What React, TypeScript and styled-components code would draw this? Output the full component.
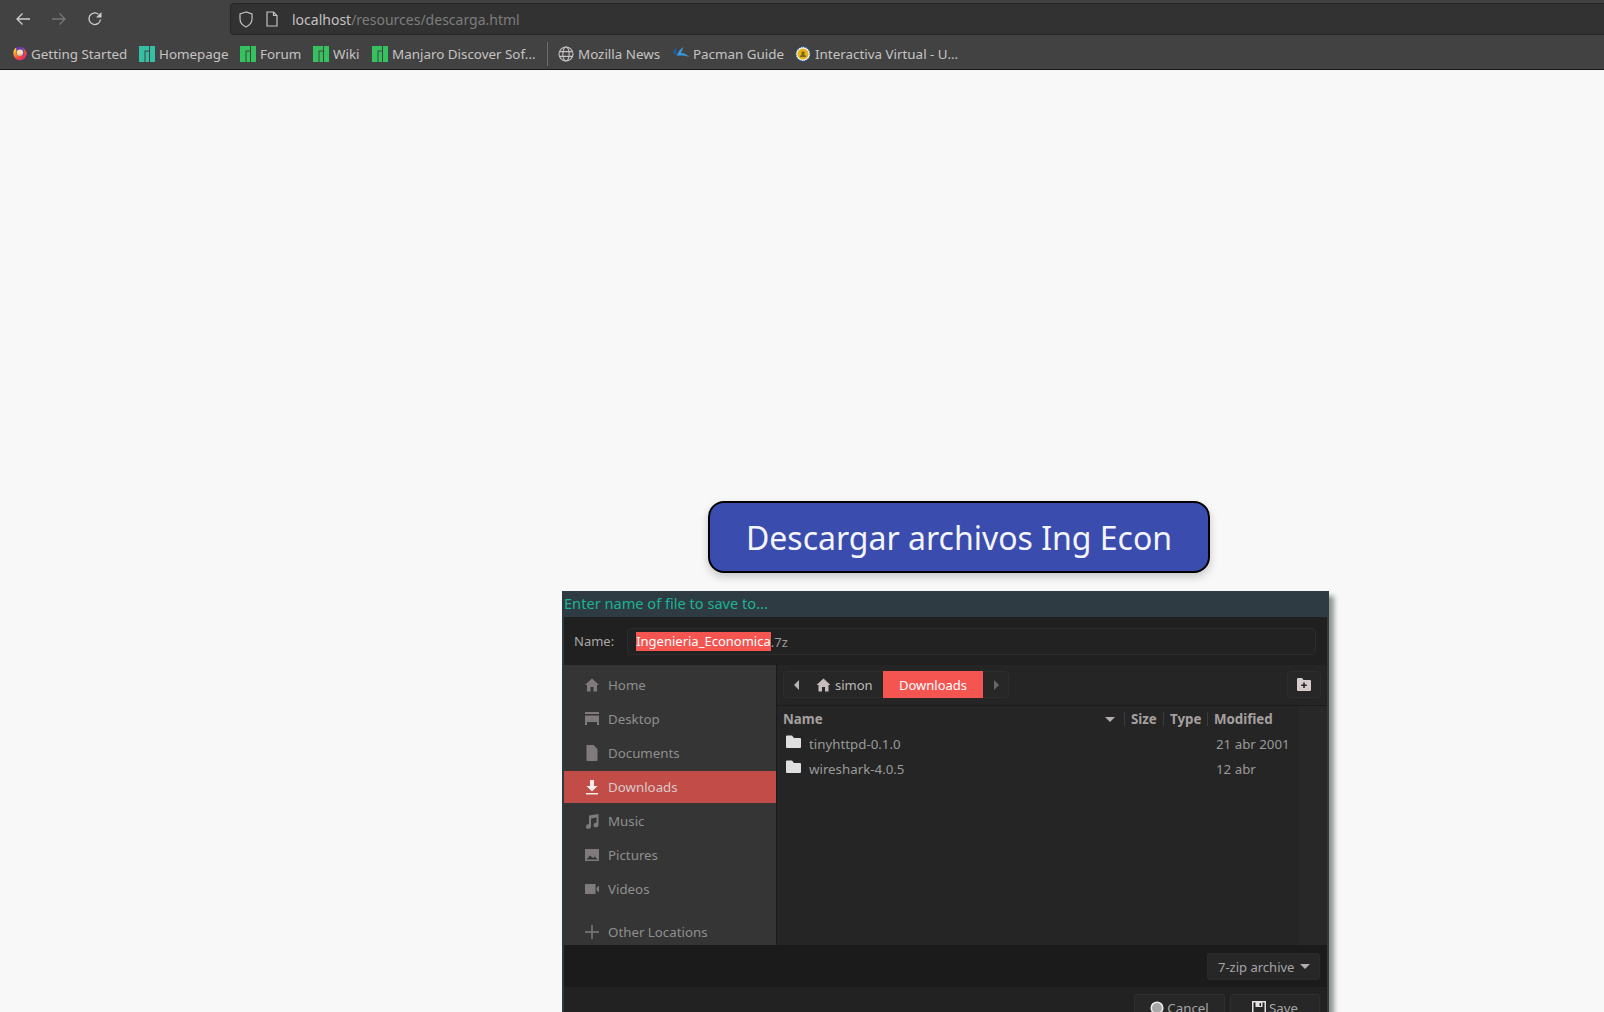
import React from "react";
import styled, { createGlobalStyle } from "styled-components";

const Global = createGlobalStyle`
  html, body { margin: 0; padding: 0; height: 1012px; overflow: hidden; background: #f8f8f8; }
  body { font-family: "Noto Sans", "Open Sans", sans-serif; }
`;

const Page = styled.div`
  width: 1604px;
  height: 1012px;
  overflow: hidden;
  display: flex;
  flex-direction: column;
  background: #f8f8f8;
`;

const Browser = styled.header`
  height: 70px;
  box-sizing: border-box;
  flex: none;
  background: #424242;
  border-bottom: 1px solid #161616;
  display: flex;
  flex-direction: column;
`;

const NavRow = styled.div`
  height: 37px;
  box-sizing: border-box;
  padding-top: 1px;
  display: flex;
  align-items: center;
  padding-left: 12px;
`;

const NavButton = styled.span<{ $dim?: boolean }>`
  width: 22px;
  height: 22px;
  margin-right: 14px;
  display: flex;
  align-items: center;
  justify-content: center;
  color: ${(p) => (p.$dim ? "#777" : "#d0cccc")};
`;

const UrlBar = styled.div`
  margin-left: 110px;
  height: 32px;
  flex: 1;
  box-sizing: border-box;
  background: #323232;
  border: 1px solid #262626;
  border-right: none;
  border-radius: 4px 0 0 4px;
  display: flex;
  align-items: center;
  padding-left: 6px;
  gap: 8px;
  color: #c4c0c0;
  font-size: 14px;
`;

const UrlIcon = styled.span`
  display: flex;
  width: 18px;
  justify-content: center;
  color: #c4c0c0;
`;

const UrlText = styled.span`
  margin-left: 3px;
  color: #c4c0c0;
`;

const UrlPath = styled.span`
  color: #7d7d7d;
`;

const BookmarkRow = styled.div`
  height: 32px;
  box-sizing: border-box;
  padding: 1px 0 0 11px;
  display: flex;
  align-items: center;
  font-size: 13.4px;
  color: #c6c2c2;
`;

const Bookmark = styled.span<{ $w: number }>`
  display: flex;
  align-items: center;
  gap: 4px;
  width: ${(p) => p.$w}px;
  white-space: nowrap;
`;

const BookmarkSep = styled.span`
  width: 1px;
  height: 24px;
  background: #6d6d6d;
  margin: 0 10px 0 0;
`;

const Content = styled.main`
  flex: 1;
  display: flex;
  flex-direction: column;
  align-items: flex-start;
  padding-top: 431px;
`;

const DownloadButton = styled.button`
  margin-left: 708px;
  width: 502px;
  height: 72px;
  box-sizing: border-box;
  background: #3a4cad;
  border: 2px solid #000;
  border-radius: 16px;
  color: #f4f4fb;
  font-family: "Noto Sans", sans-serif;
  font-size: 32px;
  padding: 0;
  box-shadow: 0 4px 8px rgba(0, 0, 0, 0.2);
`;

const Dialog = styled.section`
  margin: 18px 0 0 562px;
  width: 767px;
  height: 430px;
  flex: none;
  background: #2e3b43;
  box-shadow: 5px 5px 5px rgba(0, 0, 0, 0.42);
  display: flex;
  flex-direction: column;
`;

const TitleBar = styled.div`
  height: 26px;
  flex: none;
  color: #1ab394;
  font-size: 14.6px;
  line-height: 25px;
  padding-left: 2px;
`;

const DialogBody = styled.div`
  flex: 1;
  margin: 0 2px;
  display: flex;
  flex-direction: column;
  color: #9c9c9c;
  font-size: 13.3px;
`;

const NameRow = styled.div`
  height: 48px;
  flex: none;
  background: #202020;
  display: flex;
  align-items: center;
  padding: 0 11px 0 10px;
  gap: 13px;
  font-size: 13px;
`;

const NameLabel = styled.label`
  color: #a8a8a8;
`;

const NameEntry = styled.div`
  flex: 1;
  height: 27px;
  margin-top: 1px;
  box-sizing: border-box;
  border: 1px solid #2c2c2c;
  border-radius: 4px;
  background: #222;
  display: flex;
  align-items: center;
  padding-left: 8px;
  color: #9c9c9c;
`;

const Selection = styled.span`
  background: #f45551;
  color: #fff;
  line-height: 19px;
`;

const Split = styled.div`
  height: 280px;
  flex: none;
  display: flex;
`;

const Sidebar = styled.nav`
  width: 212px;
  flex: none;
  background: #353535;
  border-right: 1px solid #1a1a1a;
  box-sizing: content-box;
  padding-top: 3px;
  overflow: hidden;
`;

const Place = styled.div<{ $active?: boolean; $gap?: number }>`
  height: ${(p) => (p.$active ? 32 : 34)}px;
  margin: ${(p) => (p.$active ? "1px 0" : "0")};
  margin-top: ${(p) => (p.$gap ? `${p.$gap}px` : undefined)};
  display: flex;
  align-items: center;
  padding-left: 21px;
  gap: 9px;
  background: ${(p) => (p.$active ? "#c24d48" : "transparent")};
  color: ${(p) => (p.$active ? "#d8c8c8" : "#8f8f8f")};
`;

const PlaceIcon = styled.svg<{ $active?: boolean }>`
  width: 14px;
  height: 16px;
  flex: none;
  fill: ${(p) => (p.$active ? "#f2eaea" : "#7f7b7b")};
`;

const Files = styled.div`
  flex: 1;
  display: flex;
  flex-direction: column;
  background: #252525;
`;

const PathRow = styled.div`
  height: 41px;
  flex: none;
  box-sizing: border-box;
  border-bottom: 1px solid #1c1c1c;
  display: flex;
  align-items: flex-start;
  justify-content: space-between;
  padding: 6px 6px 0 6px;
`;

const PathBar = styled.div`
  width: 226px;
  height: 27px;
  box-sizing: border-box;
  border: 1px solid #2d2d2d;
  border-radius: 4px;
  background: #272727;
  display: flex;
  align-items: center;
  color: #bdbaba;
  font-size: 13px;
`;

const PathArrow = styled.span<{ $dim?: boolean }>`
  flex: none;
  width: 0;
  height: 0;
  border-top: 5px solid transparent;
  border-bottom: 5px solid transparent;
  ${(p) =>
    p.$dim
      ? "border-left: 5px solid #666; margin-left: 11px;"
      : "border-right: 5px solid #b9b4b4; margin-left: 10px;"}
`;

const Crumb = styled.span`
  flex: none;
  display: flex;
  align-items: center;
  gap: 4px;
  margin-left: 17px;
  width: 67px;
  svg { fill: #c9bcbc; }
`;

const CrumbActive = styled.span`
  flex: none;
  width: 100px;
  height: 27px;
  background: #f45551;
  color: #fff;
  display: flex;
  align-items: center;
  justify-content: center;
`;

const SquareButton = styled.span`
  width: 34px;
  height: 27px;
  box-sizing: border-box;
  border: 1px solid #2d2d2d;
  border-radius: 4px;
  background: #272727;
  display: flex;
  align-items: center;
  justify-content: center;
`;

const ListArea = styled.div`
  flex: 1;
  display: flex;
`;

const List = styled.div`
  flex: 1;
  display: flex;
  flex-direction: column;
`;

const Scrollbar = styled.div`
  width: 28px;
  flex: none;
  background: #282828;
`;

const HeaderRow = styled.div`
  display: grid;
  grid-template-columns: 347px 39px 44px 1fr;
  height: 26px;
  align-items: center;
  margin-bottom: -1px;
  font-weight: 700;
  color: #a5a0a0;
  font-size: 13.3px;
`;

const HeaderCell = styled.span<{ $first?: boolean }>`
  display: flex;
  align-items: center;
  justify-content: space-between;
  height: 14px;
  padding-left: 6px;
  padding-right: ${(p) => (p.$first ? 9 : 0)}px;
  border-left: ${(p) => (p.$first ? "none" : "1px solid #3c3c3c")};
`;

const SortArrow = styled.span`
  width: 0;
  height: 0;
  border-left: 5px solid transparent;
  border-right: 5px solid transparent;
  border-top: 5px solid #b5aeae;
`;

const FileRow = styled.div`
  display: grid;
  grid-template-columns: 439px 1fr;
  height: 25px;
  align-items: center;
  color: #9a9a9a;
`;

const FileName = styled.span`
  display: flex;
  align-items: center;
  gap: 8px;
  padding-left: 9px;
  svg { fill: #dfdfdf; margin-top: -3px; }
`;

const FilterBar = styled.div`
  height: 42px;
  flex: none;
  box-sizing: border-box;
  background: #1b1b1b;
  display: flex;
  align-items: center;
  justify-content: flex-end;
  padding: 1px 7px 0 0;
`;

const Combo = styled.div`
  width: 113px;
  height: 27px;
  box-sizing: border-box;
  border: 1px solid #2b2b2b;
  border-radius: 3px;
  background: #272727;
  display: flex;
  align-items: center;
  gap: 6px;
  padding-left: 10px;
  color: #a5a5a5;
  font-size: 13px;
`;

const Actions = styled.div`
  flex: 1;
  background: #222;
  display: flex;
  justify-content: flex-end;
  gap: 5px;
  padding: 7px 7px 0 0;
`;

const ActionButton = styled.button<{ $w: number }>`
  width: ${(p) => p.$w}px;
  height: 27px;
  box-sizing: border-box;
  border: 1px solid #2f2f2f;
  border-radius: 3px;
  background: #272727;
  color: #a5a5a5;
  display: flex;
  align-items: center;
  justify-content: center;
  gap: 3px;
  padding: 0;
  font-family: inherit;
  font-size: 13.3px;
`;

const ManjaroLogo = ({ c }: { c: string }) => (
  <svg width="16" height="16" viewBox="0 0 16 16">
    <path fill={c} d="M0 0h10v4.500H5.500V16H0zM6.500 5.500H10V16H6.500zM11 0h5v16h-5z" />
  </svg>
);

const FirefoxSvg = styled.svg`
  margin-left: 2px;
  flex: none;
`;

const FirefoxIcon = () => (
  <FirefoxSvg width="14" height="15" viewBox="0 0 16 16">
    <defs>
      <linearGradient id="ff" x1="0.1" y1="0.2" x2="0.8" y2="1">
        <stop offset="0" stopColor="#ffc52e" />
        <stop offset="0.55" stopColor="#f7532c" />
        <stop offset="1" stopColor="#e3198a" />
      </linearGradient>
    </defs>
    <circle cx="8" cy="8" r="7.600" fill="#6a3ab8" />
    <path fill="url(#ff)" d="M3 1.500C1.200 3 .4 5.500.4 8a7.600 7.600 0 0 0 15.200 0c0-.5-.1-1-.2-1.500-1-2-3-4-5.400-4.500 2 1 3 2.500 3 4.500a4.500 4.500 0 0 1-9 0c0-2 0-3.500-1-5z" />
    <circle cx="8" cy="7" r="3.600" fill="#f5e4a8" />
    <path fill="#f7632c" d="M4.500 6.500a3.600 3.600 0 0 0 7 1 4 4 0 0 1-3.500 2c-1.500 0-3-1.200-3.500-3z" />
  </FirefoxSvg>
);

const GlobeIcon = () => (
  <svg width="16" height="16" viewBox="0 0 16 16" fill="none" stroke="#c6c2c2" strokeWidth="1.100">
    <circle cx="8" cy="8" r="7" />
    <ellipse cx="8" cy="8" rx="3.200" ry="7" />
    <path d="M1.400 5.600h13.200M1.400 10.400h13.200" />
  </svg>
);

const PacmanIcon = () => (
  <svg width="16" height="14" viewBox="0 0 16 14">
    <path fill="#1d5f94" d="M0 5.500C.5 3.500 1.500 2 3 1l1 8C2.500 7.500 1 6 0 5.500z" />
    <path fill="#3a97dc" d="M4 9C4.500 5.500 7 2 10.500 0L8 6c3 0 6 1.500 8 4-4-1.500-8-1.800-12-1z" />
  </svg>
);

const VirtualIcon = () => (
  <svg width="16" height="16" viewBox="0 0 16 16">
    <circle cx="8" cy="8" r="7.200" fill="#f4f4f4" stroke="#1f4f90" strokeWidth="1.200" strokeDasharray="1.500 1" />
    <circle cx="8" cy="8" r="5.600" fill="#e8b314" />
    <path fill="#7a6420" d="M5 9.500h6V11H5zM6.500 5.500h3v4h-3z" />
  </svg>
);

const FolderIcon = () => (
  <svg width="15" height="14" viewBox="0 0 15 14">
    <path d="M0 1.500A1 1 0 0 1 1 .5h5l2 2.500h6a1 1 0 0 1 1 1V12a1 1 0 0 1-1 1H1a1 1 0 0 1-1-1z" />
  </svg>
);

const HomePath = "M7 1.500 0 8h2v6.500h3.500V10h3v4.500H12V8h2z";

export default function App() {
  const places = [
    { label: "Home", d: HomePath },
    { label: "Desktop", d: "M0 1h14v2H0zM0 4.500h14V14h-2v-3H2v3H0z" },
    { label: "Documents", d: "M1.500 0h7L12.500 4v11a1 1 0 0 1-1 1h-9a1 1 0 0 1-1-1z" },
    { label: "Downloads", d: "M5 1h4v6h3.500L7 12.500 1.500 7H5zM1 14h12v1.500H1z", active: true },
    { label: "Music", d: "M4 2.500 13.500 1v11a2.500 2.300 0 1 1-2-2.200V4.500L6 5.500V13.500a2.500 2.300 0 1 1-2-2.200z" },
    { label: "Pictures", d: "M0 2h14v12H0zM1.500 12.500h11L10 9.500 8 11 5 8.500z" },
    { label: "Videos", d: "M0 3h10.500v10H0zM11.500 7 14.500 4v8l-3-3z" },
  ];
  return (
    <Page>
      <Global />
      <Browser>
        <NavRow>
          <NavButton>
            <svg width="16" height="16" viewBox="0 0 16 16" fill="none" stroke="currentColor" strokeWidth="1.300">
              <path d="M15 8H2M7.500 2.500 2 8l5.500 5.500" />
            </svg>
          </NavButton>
          <NavButton $dim>
            <svg width="16" height="16" viewBox="0 0 16 16" fill="none" stroke="currentColor" strokeWidth="1.300">
              <path d="M1 8h13M8.500 2.500 14 8l-5.500 5.500" />
            </svg>
          </NavButton>
          <NavButton>
            <svg width="16" height="16" viewBox="0 0 16 16" fill="none" stroke="currentColor" strokeWidth="1.300">
              <path d="M13.500 8.500A5.800 5.800 0 1 1 11.500 3.300" />
              <path fill="currentColor" stroke="none" d="M14.500 1v5.500H9z" />
            </svg>
          </NavButton>
          <UrlBar>
            <UrlIcon>
              <svg width="16" height="17" viewBox="0 0 16 17" fill="none" stroke="currentColor" strokeWidth="1.200">
                <path d="M8 1 2 3v5c0 4 3 6.500 6 8 3-1.500 6-4 6-8V3z" />
              </svg>
            </UrlIcon>
            <UrlIcon>
              <svg width="14" height="16" viewBox="0 0 14 16" fill="none" stroke="currentColor" strokeWidth="1.200">
                <path d="M2 1h6.500L12 4.500V15H2zM8.500 1v3.500H12" />
              </svg>
            </UrlIcon>
            <UrlText>
              localhost<UrlPath>/resources/descarga.html</UrlPath>
            </UrlText>
          </UrlBar>
        </NavRow>
        <BookmarkRow>
          <Bookmark $w={128}><FirefoxIcon />Getting Started</Bookmark>
          <Bookmark $w={101}><ManjaroLogo c="#35bfa4" />Homepage</Bookmark>
          <Bookmark $w={73}><ManjaroLogo c="#35c25e" />Forum</Bookmark>
          <Bookmark $w={59}><ManjaroLogo c="#35c25e" />Wiki</Bookmark>
          <Bookmark $w={175}><ManjaroLogo c="#35c25e" />Manjaro Discover Sof...</Bookmark>
          <BookmarkSep />
          <Bookmark $w={115}><GlobeIcon />Mozilla News</Bookmark>
          <Bookmark $w={122}><PacmanIcon />Pacman Guide</Bookmark>
          <Bookmark $w={170}><VirtualIcon />Interactiva Virtual - U...</Bookmark>
        </BookmarkRow>
      </Browser>
      <Content>
        <DownloadButton>Descargar archivos Ing Econ</DownloadButton>
        <Dialog>
          <TitleBar>Enter name of file to save to...</TitleBar>
          <DialogBody>
            <NameRow>
              <NameLabel>Name:</NameLabel>
              <NameEntry>
                <Selection>Ingenieria_Economica</Selection>.7z
              </NameEntry>
            </NameRow>
            <Split>
              <Sidebar>
                {places.map((p) => (
                  <Place key={p.label} $active={p.active}>
                    <PlaceIcon viewBox="0 0 14 16" $active={p.active}>
                      <path fillRule="evenodd" d={p.d} />
                    </PlaceIcon>
                    {p.label}
                  </Place>
                ))}
                <Place $gap={9}>
                  <PlaceIcon viewBox="0 0 14 16">
                    <path d="M6.300 1h1.400v6.300H14v1.400H7.700V15H6.300V8.700H0V7.300h6.300z" />
                  </PlaceIcon>
                  Other Locations
                </Place>
              </Sidebar>
              <Files>
                <PathRow>
                  <PathBar>
                    <PathArrow />
                    <Crumb>
                      <svg width="15" height="16" viewBox="0 0 14 16"><path d={HomePath} /></svg>
                      simon
                    </Crumb>
                    <CrumbActive>Downloads</CrumbActive>
                    <PathArrow $dim />
                  </PathBar>
                  <SquareButton>
                    <svg width="14" height="13" viewBox="0 0 14 13">
                      <path fill="#d6cccc" fillRule="evenodd" d="M0 1a1 1 0 0 1 1-1h4l1.500 2H13a1 1 0 0 1 1 1v9a1 1 0 0 1-1 1H1a1 1 0 0 1-1-1zM6.200 4.500v2h-2v1.500h2v2h1.600V8h2V6.500h-2v-2z" />
                    </svg>
                  </SquareButton>
                </PathRow>
                <ListArea>
                  <List>
                    <HeaderRow>
                      <HeaderCell $first>Name<SortArrow /></HeaderCell>
                      <HeaderCell>Size</HeaderCell>
                      <HeaderCell>Type</HeaderCell>
                      <HeaderCell>Modified</HeaderCell>
                    </HeaderRow>
                    <FileRow>
                      <FileName><FolderIcon />tinyhttpd-0.1.0</FileName>
                      <span>21 abr 2001</span>
                    </FileRow>
                    <FileRow>
                      <FileName><FolderIcon />wireshark-4.0.5</FileName>
                      <span>12 abr</span>
                    </FileRow>
                  </List>
                  <Scrollbar />
                </ListArea>
              </Files>
            </Split>
            <FilterBar>
              <Combo>7-zip archive<SortArrow /></Combo>
            </FilterBar>
            <Actions>
              <ActionButton $w={91}>
                <svg width="14" height="14" viewBox="0 0 14 14">
                  <circle cx="7" cy="7" r="5.800" fill="#a8a8a8" stroke="#eee" strokeWidth="1.500" />
                </svg>
                Cancel
              </ActionButton>
              <ActionButton $w={90}>
                <svg width="14" height="14" viewBox="0 0 14 14">
                  <path fill="#e6e0e0" fillRule="evenodd" d="M0 0h14v14H0zM1.500 1.500v11h11v-11h-2V6H3.500V1.500zM7.500 2v3H9V2z" />
                </svg>
                Save
              </ActionButton>
            </Actions>
          </DialogBody>
        </Dialog>
      </Content>
    </Page>
  );
}
